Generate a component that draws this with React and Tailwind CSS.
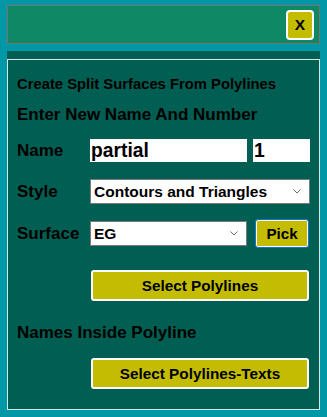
import React, { useState } from 'react';

const Chevron = () => (
  <svg width="8" height="5" viewBox="0 0 8 5" className="shrink-0">
    <polyline points="0.5,0.5 4,4 7.5,0.5" fill="none" stroke="#6b6b6b" strokeWidth="1" />
  </svg>
);

const FakeSelect = ({ value, width }) => (
  <div className={`${width} h-[25px] bg-white border border-[#7a7a7a] flex items-center justify-between pl-[3px] pr-[8px]`}>
    <span className="text-[15.5px] font-bold leading-none">{value}</span>
    <Chevron />
  </div>
);

const YellowButton = ({ children }) => (
  <button className="ml-[74px] w-[218px] h-[31px] bg-[#c4bc00] border-2 border-white rounded-[3px] text-[15.3px] font-bold leading-none text-black">
    {children}
  </button>
);

const App = () => {
  const [name, setName] = useState('partial');
  const [number, setNumber] = useState('1');

  return (
    <div className="w-[327px] h-[417px] bg-[#0097a7] pt-[5px] px-[7px] font-['Liberation_Sans',Arial,sans-serif] text-black overflow-hidden">
      {/* Title bar */}
      <div className="h-[39px] bg-[#0e8966] border border-[#7d6f6f] flex items-center justify-end pr-[5px]">
        <button className="w-[28px] h-[30px] bg-[#c4bc00] border-2 border-white rounded-[4px] text-[15.5px] font-bold leading-none flex items-center justify-center">
          X
        </button>
      </div>

      {/* Panel */}
      <div className="mt-[7px] bg-[#005e52] pt-[8px]">
        <div className="h-[351px] border border-[#d7e6e2] pl-[9px] pt-[14px]">
          <div className="h-[20px] leading-[20px] text-[14.8px] font-bold whitespace-nowrap">Create Split Surfaces From Polylines</div>
          <div className="mt-[11px] h-[20px] leading-[20px] text-[17px] font-bold whitespace-nowrap">Enter New Name And Number</div>

          <div className="mt-[14px] flex items-center h-[23px]">
            <div className="w-[73px] text-[17px] font-bold leading-none">Name</div>
            <input
              value={name}
              onChange={e => setName(e.target.value)}
              className="w-[157px] h-[23px] bg-white px-[1px] text-[19.3px] font-bold leading-none outline-none"
            />
            <input
              value={number}
              onChange={e => setNumber(e.target.value)}
              className="ml-[6px] w-[57px] h-[23px] bg-white px-[1px] text-[19.3px] font-bold leading-none outline-none"
            />
          </div>

          <div className="mt-[17px] flex items-center h-[25px]">
            <div className="w-[73px] text-[17px] font-bold leading-none">Style</div>
            <FakeSelect value="Contours and Triangles" width="w-[220px]" />
          </div>

          <div className="mt-[15px] flex items-center h-[29px]">
            <div className="w-[73px] text-[17px] font-bold leading-none">Surface</div>
            <FakeSelect value="EG" width="w-[157px]" />
            <button className="ml-[8px] w-[54px] h-[29px] bg-[#c4bc00] border border-[#0a74da] rounded-[3px] shadow-[inset_0_0_0_1px_#ffffff] text-[15.2px] font-bold leading-none">
              Pick
            </button>
          </div>

          <div className="mt-[22px]">
            <YellowButton>Select Polylines</YellowButton>
          </div>

          <div className="mt-[22px] h-[20px] leading-[20px] text-[17px] font-bold whitespace-nowrap">Names Inside Polyline</div>

          <div className="mt-[15px]">
            <YellowButton>Select Polylines-Texts</YellowButton>
          </div>
        </div>
      </div>
    </div>
  );
};

export default App;
